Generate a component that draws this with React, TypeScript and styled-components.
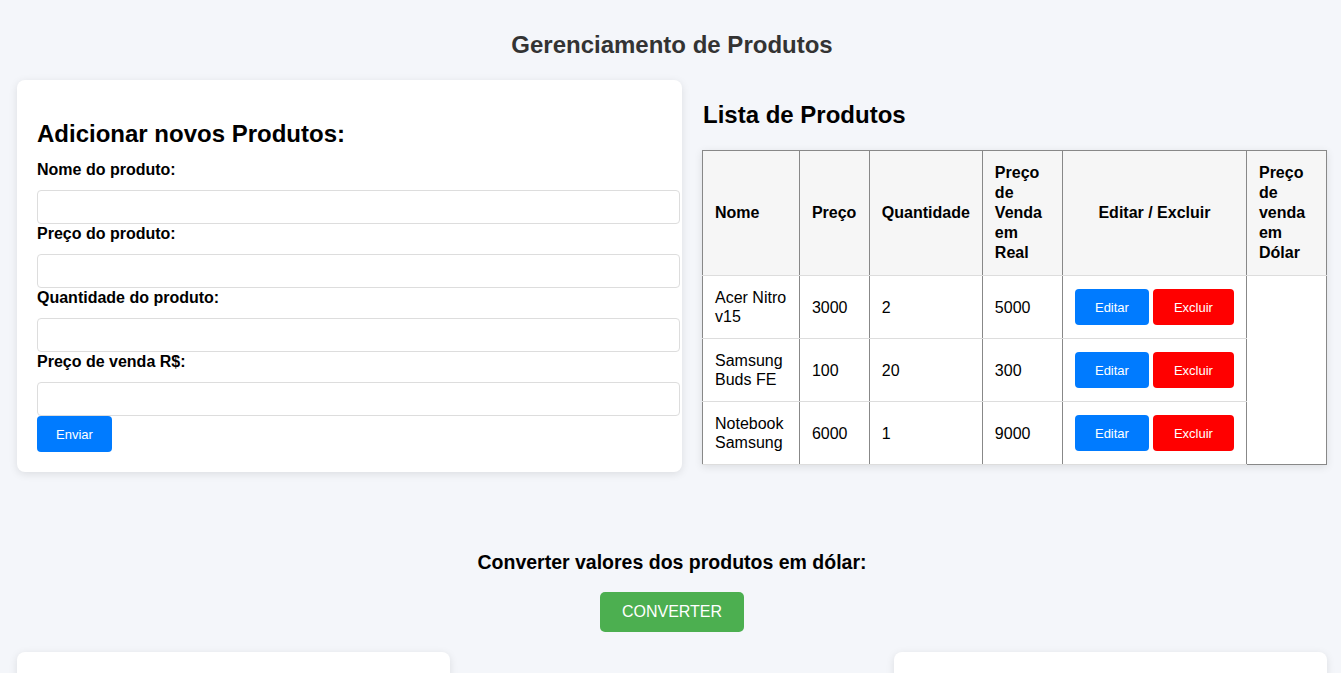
import styled, { createGlobalStyle } from "styled-components";

const GlobalStyle = createGlobalStyle`
    body {
        margin: 0;
        background: #f4f6fa;
        font-family: "Liberation Sans", Arial, sans-serif;
        color: #000;
    }
`;

interface Product {
    nome: string[];
    preco: number;
    quantidade: number;
    venda: number;
}

const products: Product[] = [
    { nome: ["Acer Nitro", "v15"], preco: 3000, quantidade: 2, venda: 5000 },
    { nome: ["Samsung", "Buds FE"], preco: 100, quantidade: 20, venda: 300 },
    { nome: ["Notebook", "Samsung"], preco: 6000, quantidade: 1, venda: 9000 },
];

const fields = ["Nome do produto:", "Preço do produto:", "Quantidade do produto:", "Preço de venda R$:"];

export default function App() {
    return (
        <Page>
            <GlobalStyle />
            <Title>Gerenciamento de Produtos</Title>
            <Main>
                <FormCard>
                    <SectionTitle>Adicionar novos Produtos:</SectionTitle>
                    {fields.map((f) => (
                        <Field key={f}>
                            <Label>{f}</Label>
                            <Input type="text" />
                        </Field>
                    ))}
                    <SendButton>Enviar</SendButton>
                </FormCard>
                <ListColumn>
                    <SectionTitle>Lista de Produtos</SectionTitle>
                    <Table>
                        <thead>
                            <tr>
                                <Th $w={97}>Nome</Th>
                                <Th $w={70}>Preço</Th>
                                <Th $w={113}>Quantidade</Th>
                                <Th $w={81}>
                                    Preço
                                    <br />
                                    de
                                    <br />
                                    Venda
                                    <br />
                                    em
                                    <br />
                                    Real
                                </Th>
                                <Th $w={183} $center>
                                    Editar / Excluir
                                </Th>
                                <Th $w={81}>
                                    Preço
                                    <br />
                                    de
                                    <br />
                                    venda
                                    <br />
                                    em
                                    <br />
                                    Dólar
                                </Th>
                            </tr>
                        </thead>
                        <tbody>
                            {products.map((p) => (
                                <tr key={p.nome.join(" ")}>
                                    <Td>
                                        {p.nome[0]}
                                        <br />
                                        {p.nome[1]}
                                    </Td>
                                    <Td>{p.preco}</Td>
                                    <Td>{p.quantidade}</Td>
                                    <Td>{p.venda}</Td>
                                    <Td>
                                        <Actions>
                                            <ActionButton $variant="edit">Editar</ActionButton>
                                            <ActionButton $variant="delete">Excluir</ActionButton>
                                        </Actions>
                                    </Td>
                                </tr>
                            ))}
                        </tbody>
                    </Table>
                </ListColumn>
            </Main>
            <Converter>
                <ConverterTitle>Converter valores dos produtos em dólar:</ConverterTitle>
                <ConvertButton>CONVERTER</ConvertButton>
            </Converter>
            <Cards>
                <BottomCard />
                <BottomCard />
            </Cards>
        </Page>
    );
}

const Page = styled.div`
    padding: 0 14px 0 17px;
`;

const Title = styled.h1`
    margin: 0;
    padding: 31px 0 21px;
    text-align: center;
    font-size: 24px;
    line-height: 28px;
    font-weight: bold;
    color: #333;
`;

const Main = styled.div`
    display: flex;
    align-items: flex-start;
    gap: 20px;
`;

const FormCard = styled.div`
    flex: 0 0 625px;
    background: #fff;
    padding: 20px;
    border-radius: 8px;
    box-shadow: 0 2px 8px rgba(0, 0, 0, 0.1);
`;

const SectionTitle = styled.h2`
    margin: 20px 0 12px;
    font-size: 24px;
    line-height: 28px;
    font-weight: bold;
`;

const Field = styled.div`
    display: flex;
    flex-direction: column;
`;

const Label = styled.label`
    font-size: 16px;
    font-weight: bold;
    line-height: 20px;
    margin-bottom: 10px;
`;

const Input = styled.input`
    box-sizing: content-box;
    width: 100%;
    height: 16px;
    padding: 8px;
    border: 1px solid #ddd;
    border-radius: 4px;
    font-size: 13px;
    background: #fff;
`;

const SendButton = styled.button`
    display: block;
    height: 36px;
    padding: 0 19px;
    border: none;
    border-radius: 4px;
    background: #007bff;
    color: #fff;
    font-family: "Liberation Sans", Arial, sans-serif;
    font-size: 13px;
`;

const ListColumn = styled.div`
    flex: 1;
    & > h2 {
        margin: 21px 0 21px 1px;
    }
`;

const Table = styled.table`
    border-collapse: collapse;
    width: 625px;
    background: #fff;
    border: 1px solid #888;
    box-shadow: 0 2px 8px rgba(0, 0, 0, 0.1);
`;

const Th = styled.th<{ $w: number; $center?: boolean }>`
    width: ${(p) => p.$w - 25}px;
    padding: 12px;
    background: #f6f6f6;
    border-left: 1px solid #888;
    border-right: 1px solid #888;
    border-bottom: 1px solid #ddd;
    text-align: ${(p) => (p.$center ? "center" : "left")};
    font-size: 16px;
    line-height: 20px;
    font-weight: bold;
`;

const Td = styled.td`
    height: 38px;
    padding: 12px;
    border-left: 1px solid #888;
    border-right: 1px solid #888;
    border-bottom: 1px solid #ddd;
    font-size: 16px;
    line-height: 19px;
    white-space: nowrap;
    vertical-align: middle;
`;

const Actions = styled.div`
    display: flex;
    gap: 4px;
`;

const ActionButton = styled.button<{ $variant: "edit" | "delete" }>`
    height: 36px;
    padding: 0 ${(p) => (p.$variant === "edit" ? 20 : 21)}px;
    border: none;
    border-radius: 4px;
    background: ${(p) => (p.$variant === "edit" ? "#007bff" : "#ff0000")};
    color: #fff;
    font-family: "Liberation Sans", Arial, sans-serif;
    font-size: 13px;
`;

const Converter = styled.div`
    display: flex;
    flex-direction: column;
    align-items: center;
    padding-top: 79px;
`;

const ConverterTitle = styled.h3`
    margin: 0 0 19px;
    font-size: 19.5px;
    line-height: 22px;
    font-weight: bold;
`;

const ConvertButton = styled.button`
    height: 40px;
    padding: 0 22px;
    border: none;
    border-radius: 5px;
    background: #4caf50;
    color: #fff;
    font-family: "Liberation Sans", Arial, sans-serif;
    font-size: 16px;
`;

const Cards = styled.div`
    display: flex;
    justify-content: space-between;
    margin-top: 20px;
`;

const BottomCard = styled.div`
    width: 433px;
    height: 150px;
    background: #fff;
    border-radius: 8px;
    box-shadow: 0 2px 8px rgba(0, 0, 0, 0.1);
`;
